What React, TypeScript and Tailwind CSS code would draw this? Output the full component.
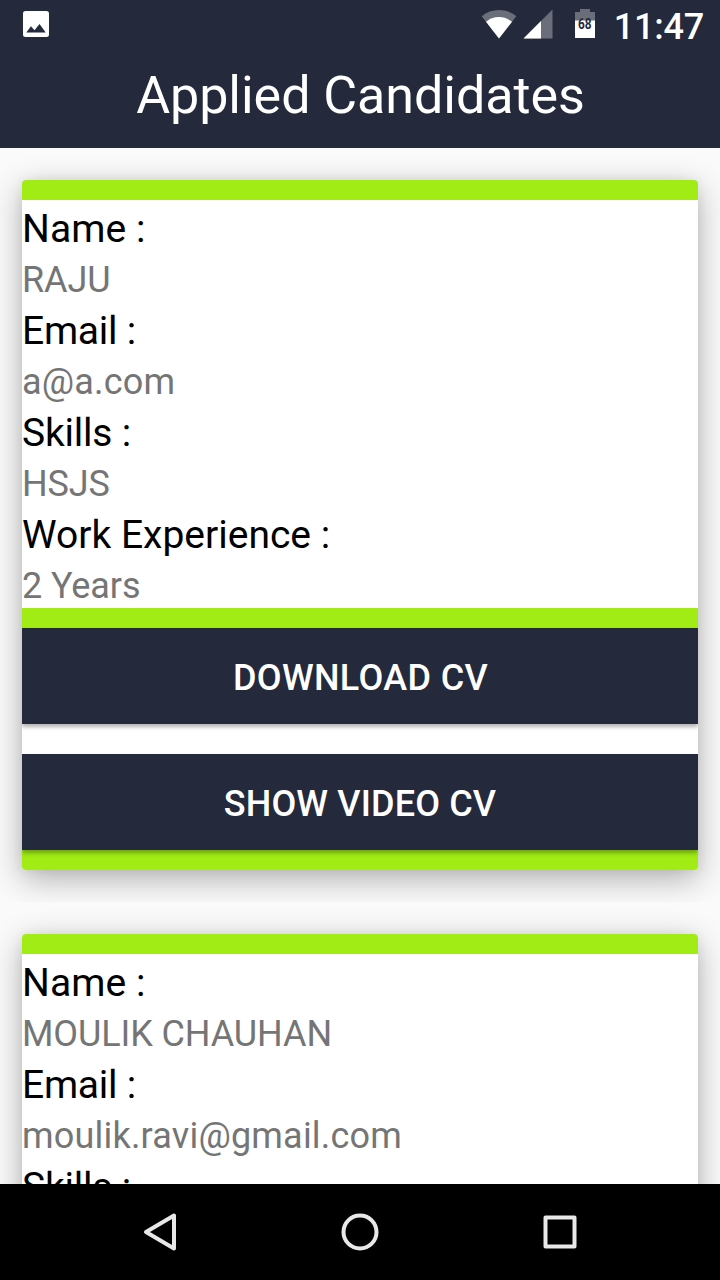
import React from "react";

type Row = { label: string; value?: string; wide?: boolean };
type Candidate = { id: string; rows: Row[]; actions: boolean };

const candidates: Candidate[] = [
  {
    id: "raju",
    rows: [
      { label: "Name", value: "RAJU" },
      { label: "Email", value: "a@a.com", wide: true },
      { label: "Skills", value: "HSJS" },
      { label: "Work Experience", value: "2 Years" },
    ],
    actions: true,
  },
  {
    id: "moulik",
    rows: [
      { label: "Name", value: "MOULIK CHAUHAN" },
      { label: "Email", value: "moulik.ravi@gmail.com", wide: true },
      { label: "Skills" },
    ],
    actions: false,
  },
];

const labelTracking: Record<string, string> = {
  Name: "tracking-[0.1px]",
  Email: "tracking-[-0.25px]",
  Skills: "tracking-[-0.2px]",
};

function StatusBar() {
  return (
    <div className="flex h-12 items-start justify-between">
      <svg className="ml-[23px] mt-[11px] h-[26px] w-[26px]" viewBox="0 0 26 26">
        <path fillRule="evenodd" fill="#fff" d="M2.500 0h21A2.500 2.500 0 0 1 26 2.500v21a2.500 2.500 0 0 1-2.500 2.500h-21A2.500 2.500 0 0 1 0 23.500v-21A2.500 2.500 0 0 1 2.500 0ZM3.300 21.500h19.400L16.500 13l-5 6.300L8 15.200Z" />
      </svg>
      <div className="flex items-start">
        <svg className="h-12 w-[134px]" viewBox="478 0 134 48">
          <path fill="#fff" fillOpacity=".32" d="M499 38.500 481.700 16.300C486.500 12.200 492.500 10 499 10s12.500 2.200 17.300 6.300Z" />
          <path fill="#fff" d="M499 38.500 486 21.800C489.500 18.800 494 17 499 17s9.500 1.800 13 4.800Z" />
          <path fill="#fff" fillOpacity=".32" d="M552.500 9.500v29h-29Z" />
          <path fill="#fff" d="M541 21v17.500h-17.500Z" />
          <path fill="#fff" fillOpacity=".32" d="M580 9h10v3h5v9h-20v-9h5Z" />
          <path fill="#fff" d="M575 20.500h20V38h-20Z" />
          <text x="584.800" y="29" textAnchor="middle" fontFamily="Roboto" fontWeight="700" fontSize="14" textLength="13.500" lengthAdjust="spacingAndGlyphs" fill="#24293b">68</text>
        </svg>
        <span className="mr-4 mt-[6px] w-[92px] whitespace-nowrap text-right text-[36px] font-medium leading-[42px] tracking-[-0.2px]">11:47</span>
      </div>
    </div>
  );
}

function Field({ label, value, wide }: Row) {
  return (
    <>
      <dt className={`h-[53px] pt-[3px] text-[39px] leading-[53px] text-black ${labelTracking[label] ?? ""}`}>{label} :</dt>
      {value && (
        <dd className={`h-[49px] pt-[3px] text-[36px] leading-[49px] text-[#757575] ${wide ? "tracking-[0.2px]" : "tracking-[-0.1px]"}`}>{value}</dd>
      )}
    </>
  );
}

const buttonClass = "relative block h-24 w-full bg-[#24293b] pt-[3px] text-[36px] font-medium text-white shadow-[0_3px_4px_rgba(0,0,0,0.3)]";

function CandidateCard({ rows, actions }: Candidate) {
  return (
    <li className="shrink-0 overflow-hidden px-[22px] py-8">
      <article className={`rounded-[4px] shadow-[0_9px_32px_rgba(0,0,0,0.3),0_0_12px_rgba(0,0,0,0.06)] ${actions ? "h-[690px]" : "h-[400px]"}`}>
        <div className="h-full overflow-hidden rounded-[4px] bg-white">
          <div className="h-5 bg-[#a0ec14]" />
          <dl>
            {rows.map((row) => <Field key={row.label} {...row} />)}
          </dl>
          {actions && (
            <>
              <div className="h-5 bg-[#a0ec14]" />
              <button className={`${buttonClass} pl-px tracking-[0.35px]`}>DOWNLOAD CV</button>
              <button className={`${buttonClass} mt-[30px] tracking-[0.15px]`}>SHOW VIDEO CV</button>
              <div className="h-5 bg-[#a0ec14]" />
            </>
          )}
        </div>
      </article>
    </li>
  );
}

export default function App() {
  return (
    <div className="flex h-[1280px] w-[720px] flex-col overflow-hidden bg-[#fafafa] font-['Roboto',sans-serif]">
      <header className="h-[148px] shrink-0 bg-[#24293b] text-white">
        <StatusBar />
        <h1 className="pl-px pt-px text-center text-[52px] leading-[94px] tracking-[-0.03px]">Applied Candidates</h1>
      </header>
      <ul className="flex min-h-0 flex-1 flex-col overflow-hidden">
        {candidates.map((c) => <CandidateCard key={c.id} {...c} />)}
      </ul>
      <nav className="flex h-24 shrink-0 items-center justify-center bg-black">
        <svg className="h-24 w-[460px]" viewBox="130 1184 460 96" fill="none" stroke="#e8e8e8" strokeWidth="4" strokeLinejoin="round">
          <path d="M174 1215.500v33L146 1232Z" />
          <circle cx="360" cy="1232" r="16.500" />
          <rect x="545.500" y="1217.500" width="29" height="29" />
        </svg>
      </nav>
    </div>
  );
}
